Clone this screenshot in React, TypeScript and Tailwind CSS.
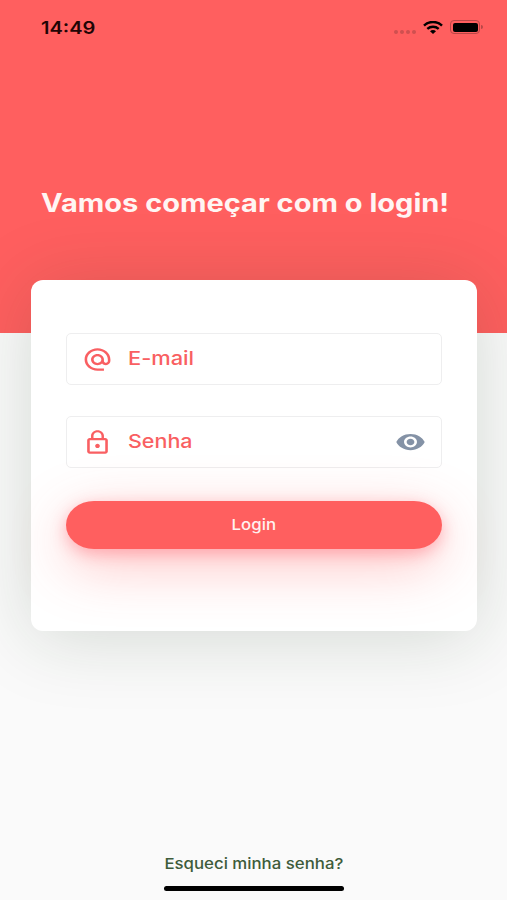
import React from "react";

const iconProps = {
  viewBox: "0 0 24 24",
  preserveAspectRatio: "none",
  fill: "currentColor",
};

function AtIcon() {
  return (
    <svg {...iconProps} className="h-[27px] w-[31px] shrink-0">
      <path d="M12 2C6.48 2 2 6.48 2 12s4.48 10 10 10h5v-2h-5c-4.34 0-8-3.66-8-8s3.66-8 8-8 8 3.66 8 8v1.43c0 .79-.71 1.57-1.5 1.57s-1.5-.78-1.5-1.57V12c0-2.76-2.24-5-5-5s-5 2.24-5 5 2.24 5 5 5c1.38 0 2.64-.56 3.54-1.47.65.89 1.77 1.47 2.96 1.47 1.97 0 3.5-1.6 3.5-3.57V12c0-5.52-4.48-10-10-10zm0 13c-1.66 0-3-1.34-3-3s1.34-3 3-3 3 1.34 3 3-1.34 3-3 3z" />
    </svg>
  );
}

function LockIcon() {
  return (
    <svg {...iconProps} className="h-[27px] w-[31px] shrink-0">
      <path d="M12 16.9c1 0 1.8-.85 1.8-1.9s-.8-1.9-1.8-1.9-1.8.85-1.8 1.9.8 1.9 1.8 1.9zm6-8.9h-1V6c0-2.76-2.24-5-5-5S7 3.24 7 6v2H6c-1.1 0-2 .9-2 2v10c0 1.1.9 2 2 2h12c1.1 0 2-.9 2-2V10c0-1.1-.9-2-2-2zM8.9 6c0-1.71 1.39-3.1 3.1-3.1s3.1 1.39 3.1 3.1v2H8.9V6zM18 20H6V10h12v10z" />
    </svg>
  );
}

function EyeIcon() {
  return (
    <svg {...iconProps} className="h-[26px] w-[31px] shrink-0 text-[#8492a6]">
      <path d="M12 4.5C7 4.5 2.73 7.61 1 12c1.73 4.39 6 7.5 11 7.5s9.27-3.11 11-7.5c-1.73-4.39-6-7.5-11-7.5zM12 17c-2.76 0-5-2.24-5-5s2.24-5 5-5 5 2.24 5 5-2.24 5-5 5zm0-8c-1.66 0-3 1.34-3 3s1.34 3 3 3 3-1.34 3-3-1.34-3-3-3z" />
    </svg>
  );
}

function WifiIcon() {
  return (
    <svg viewBox="0 0 20 13" className="h-[13px] w-[20px]" fill="none" stroke="#000">
      <path d="M1 4.6C6 -.2 14 -.2 19 4.6" strokeWidth="2.5" />
      <path d="M4.3 7.9C7.6 5 12.4 5 15.7 7.9" strokeWidth="2.4" />
      <path d="M7 10.2C8.8 8.7 11.2 8.7 13 10.2L10 12.9Z" fill="#000" stroke="none" />
    </svg>
  );
}

function StatusBar() {
  return (
    <header className="flex h-[54px] items-center pr-[24px] pl-[41px]">
      <span className="mt-[2px] origin-left scale-x-[1.18] text-[17px] leading-none font-semibold text-[#210505]">14:49</span>
      <div className="ml-auto flex items-center">
        <div className="mt-[9px] mr-[7px] flex gap-[2px]">
          <i className="size-[4px] rounded-full bg-[#cf5050]" />
          <i className="size-[4px] rounded-full bg-[#cf5050]" />
          <i className="size-[4px] rounded-full bg-[#cf5050]" />
          <i className="size-[4px] rounded-full bg-[#cf5050]" />
        </div>
        <WifiIcon />
        <div className="ml-[7px] h-[14px] w-[30px] rounded-[4px] border border-[#b84747] p-[1.5px]">
          <div className="h-full rounded-[2px] bg-black" />
        </div>
        <i className="ml-[1px] h-[4px] w-[2px] rounded-r-full bg-[#b84747]" />
      </div>
    </header>
  );
}

function Field({ icon, label, trailing }: { icon: React.ReactNode; label: React.ReactNode; trailing?: React.ReactNode }) {
  return (
    <div className="flex h-[52px] items-center rounded-[5px] border border-[#eeeeef] bg-white pr-[15px] pl-[15px] text-[#f95f62]">
      {icon}
      <div className="ml-[15px] flex-1 pb-[1px] text-[19px] leading-none font-medium">{label}</div>
      {trailing}
    </div>
  );
}

export default function App() {
  return (
    <div className="flex h-[900px] w-[507px] flex-col overflow-hidden bg-[linear-gradient(to_bottom,#ff5f5f_333.5px,#fafafa_333.5px)] font-[Inter,sans-serif]">
      <StatusBar />
      <h1 className="mt-[133px] ml-[41px] h-[32px] w-max origin-left scale-x-[1.16] text-[25px] leading-[32px] font-bold whitespace-nowrap text-[#fff5f3]">
        Vamos começar com o login!
      </h1>
      <main className="mr-[30px] ml-[31px] mt-[61px] flex h-[351px] flex-col rounded-[12px] bg-white px-[35px] pt-[53px] shadow-[0_6px_74px_rgba(25,55,25,0.17)]">
        <Field icon={<AtIcon />} label={<span className="inline-block origin-left scale-x-[1.15]">E-mail</span>} />
        <div className="mt-[31px]">
          <Field
            icon={<LockIcon />}
            label={<span className="inline-block origin-left scale-x-[1.13]">Senha</span>}
            trailing={<EyeIcon />}
          />
        </div>
        <button className="mt-[33px] h-[48px] rounded-[28px/24px] bg-[#ff5f5f] text-[15px] font-medium text-[#fff1ef] shadow-[0_5px_16px_rgba(255,80,95,0.38),0_16px_56px_rgba(255,80,80,0.34)]">
          <span className="inline-block scale-x-[1.12]">Login</span>
        </button>
      </main>
      <footer className="mt-auto flex flex-col items-center pb-[9px]">
        <a className="scale-x-[1.12] text-[15px] leading-[20px] font-medium text-[#3e5c3b]">Esqueci minha senha?</a>
        <div className="mt-[12px] h-[5px] w-[180px] rounded-full bg-black" />
      </footer>
    </div>
  );
}
